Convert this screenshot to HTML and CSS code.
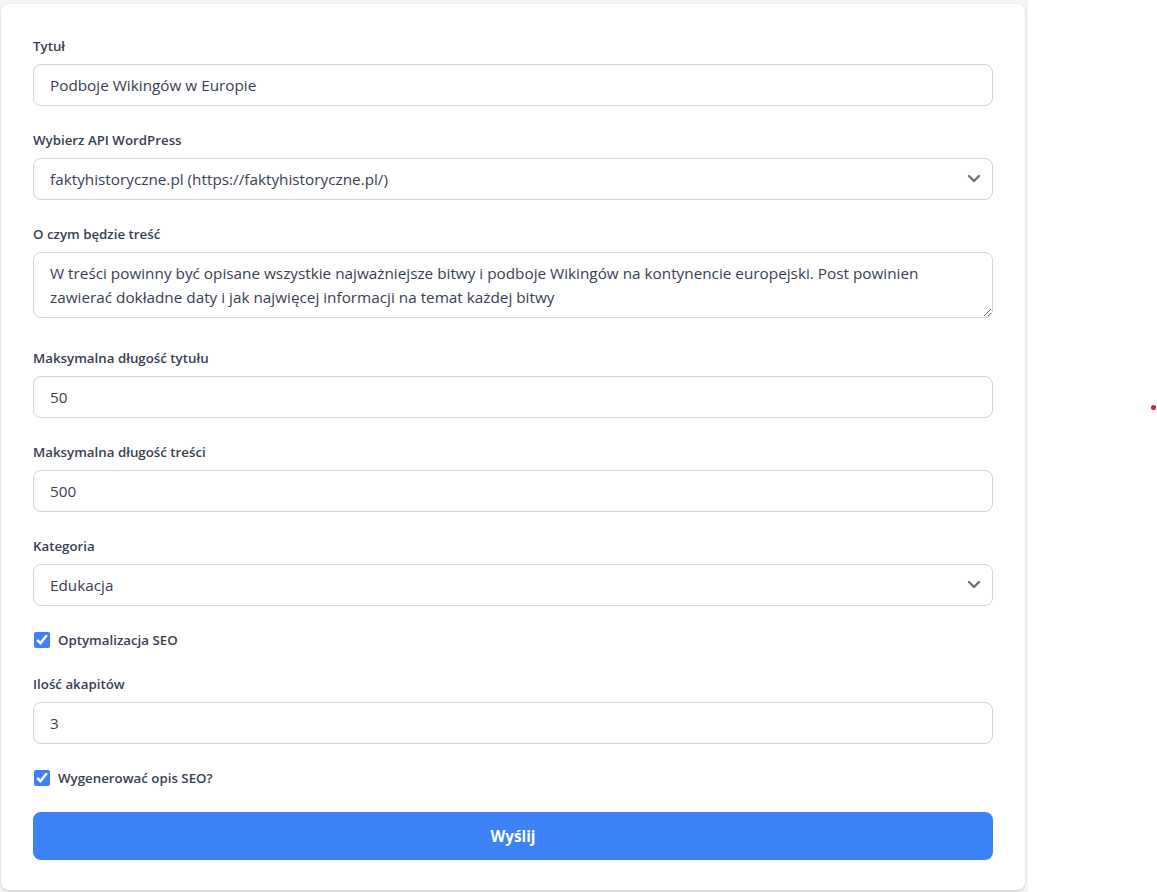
FILE: index.html
```html
<!DOCTYPE html>
<html lang="pl">
<head>
<meta charset="utf-8">
<title>Formularz</title>
<link rel="stylesheet" href="styles.css">
</head>
<body>
<div class="page">
  <div class="panel">
    <form class="card">
      <div class="field">
        <label class="label">Tytuł</label>
        <input class="input" type="text" value="Podboje Wikingów w Europie">
      </div>
      <div class="field">
        <label class="label">Wybierz API WordPress</label>
        <div class="select-wrap">
          <select class="input select"><option>faktyhistoryczne.pl (https://faktyhistoryczne.pl/)</option></select>
          <svg class="chevron" width="14" height="9" viewBox="0 0 14 9"><path d="M2 2l5 5 5-5" fill="none" stroke="#6b7280" stroke-width="2.4" stroke-linecap="round" stroke-linejoin="round"/></svg>
        </div>
      </div>
      <div class="field">
        <label class="label">O czym będzie treść</label>
        <textarea class="input textarea" rows="2">W treści powinny być opisane wszystkie najważniejsze bitwy i podboje Wikingów na kontynencie europejski. Post powinien
zawierać dokładne daty i jak najwięcej informacji na temat każdej bitwy</textarea>
      </div>
      <div class="field">
        <label class="label">Maksymalna długość tytułu</label>
        <input class="input" type="text" value="50">
      </div>
      <div class="field">
        <label class="label">Maksymalna długość treści</label>
        <input class="input" type="text" value="500">
      </div>
      <div class="field">
        <label class="label">Kategoria</label>
        <div class="select-wrap">
          <select class="input select"><option>Edukacja</option></select>
          <svg class="chevron" width="14" height="9" viewBox="0 0 14 9"><path d="M2 2l5 5 5-5" fill="none" stroke="#6b7280" stroke-width="2.4" stroke-linecap="round" stroke-linejoin="round"/></svg>
        </div>
      </div>
      <label class="check">
        <input type="checkbox" checked>
        <span>Optymalizacja SEO</span>
      </label>
      <div class="field">
        <label class="label">Ilość akapitów</label>
        <input class="input" type="text" value="3">
      </div>
      <label class="check">
        <input type="checkbox" checked>
        <span>Wygenerować opis SEO?</span>
      </label>
      <button class="submit" type="button">Wyślij</button>
    </form>
  </div>
  <div class="side"></div>
</div>
<span class="dot"></span>
</body>
</html>
```

FILE: styles.css
```css
* { box-sizing: border-box; }
html, body { margin: 0; padding: 0; background: #ffffff; }
body {
  font-family: "Open Sans", "Noto Sans", "Liberation Sans", sans-serif;
  color: #374151;
  height: 892px;
  overflow: hidden;
}
.page {
  display: flex;
  align-items: flex-start;
}
.panel {
  width: 1028px;
  background: #f3f4f6;
  padding: 4px 3px 2px 1px;
}
.card {
  background: #ffffff;
  border-radius: 8px;
  box-shadow: 0 1px 3px rgba(0,0,0,0.12), 0 1px 2px rgba(0,0,0,0.06);
  padding: 32px 32px 30px 32px;
  display: flex;
  flex-direction: column;
  gap: 24px;
}
.field {
  display: flex;
  flex-direction: column;
  gap: 8px;
}
.label {
  font-size: 13.3px;
  font-weight: 600;
  line-height: 20px;
  color: #374151;
}
.input {
  width: 100%;
  height: 42px;
  border: 1px solid #d1d5db;
  border-radius: 8px;
  padding: 8px 16px;
  font-family: "Open Sans", "Noto Sans", sans-serif;
  font-size: 15.3px;
  line-height: 24px;
  color: #374151;
  background: #ffffff;
  outline: none;
}
.select-wrap { position: relative; }
.select {
  appearance: none;
  -webkit-appearance: none;
  padding-right: 40px;
}
.chevron {
  position: absolute;
  right: 12px;
  top: 16px;
  pointer-events: none;
}
.textarea {
  height: 66px;
  resize: vertical;
  margin-bottom: 6px;
  display: block;
}
.check {
  display: flex;
  align-items: center;
  gap: 8px;
  height: 20px;
  font-size: 13.3px;
  font-weight: 600;
  color: #374151;
}
.check input {
  width: 16px;
  height: 16px;
  margin: 0 0 0 1px;
  accent-color: #3b82f6;
}
.submit {
  height: 48px;
  border: none;
  border-radius: 8px;
  background: #3b82f6;
  color: #ffffff;
  font-family: "Open Sans", "Noto Sans", sans-serif;
  font-size: 15.3px;
  font-weight: 700;
}
.side { flex: 1; }
.dot {
  position: absolute;
  left: 1151px;
  top: 405px;
  width: 5px;
  height: 5px;
  border-radius: 50%;
  background: #e11d1d;
}
```
